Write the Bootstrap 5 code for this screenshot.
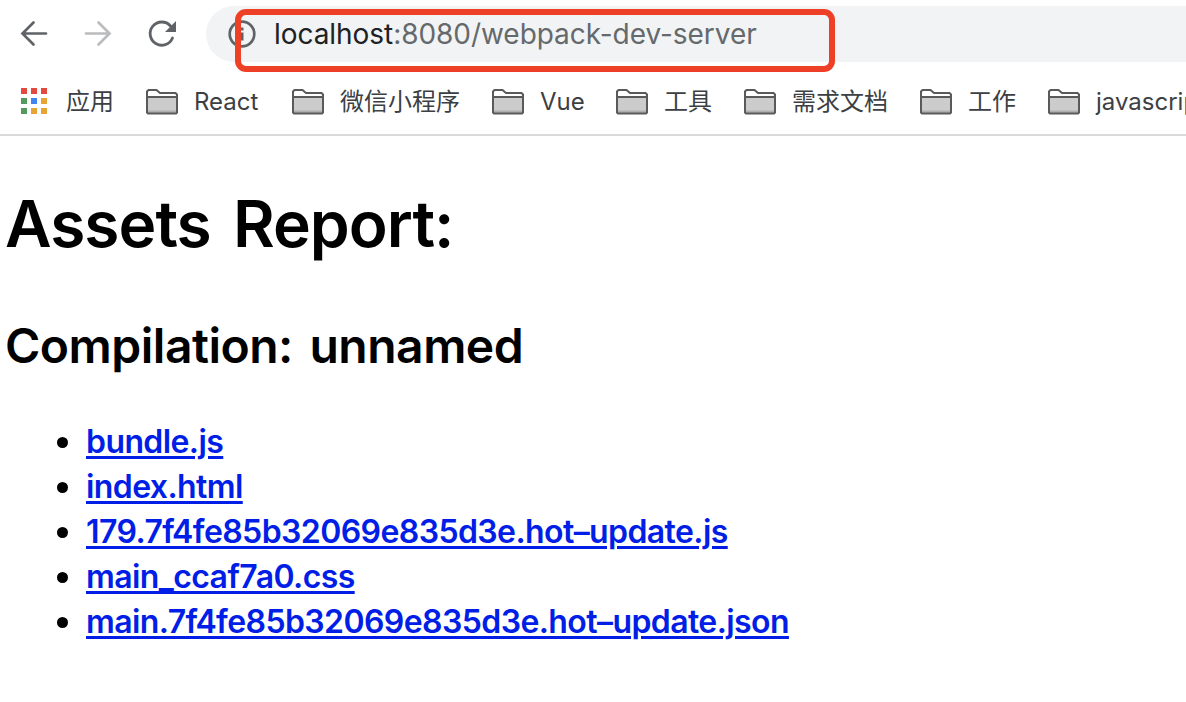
<!DOCTYPE html>
<html lang="zh-CN">
<head>
<meta charset="utf-8">
<meta name="viewport" content="width=device-width, initial-scale=1">
<title>Assets Report</title>
<link href="https://cdn.jsdelivr.net/npm/bootstrap@5.3.0/dist/css/bootstrap.min.css" rel="stylesheet">
<style>
body{font-family:Inter,"Noto Sans CJK SC",sans-serif;color:#000;background:#fff;overflow:hidden;height:702px}
svg{display:block;flex:none}
.toolbar-row{height:68px;padding:6px 0 6px 18px}
.nav-icons{gap:32px;width:188px}
.address{height:56px;background:#f1f3f4;border-radius:28px 0 0 28px;padding-left:22px;font:400 28px/56px Inter,sans-serif;color:#65696c;letter-spacing:-.05px}
.address .host{color:#202124}
.url-text{margin-left:18px}
.marker{position:absolute;left:29px;top:3px;width:600px;height:63px;border:6px solid #ee4026;border-radius:11px}
.bookmarks{height:68px;padding:2px 0 0 18px;gap:32px;border-bottom:2px solid #dadada;font:400 24px/66px Inter,"Noto Sans CJK SC",sans-serif;color:#3c4043}
.bookmarks a{gap:16px;color:inherit;line-height:36px}
.folder-name{width:66px}
.folder-name-short{width:44px}
.report{padding:52px 6px 0 5px}
.report h1{font-size:64px;font-weight:560;line-height:72px;margin:0 0 57px;letter-spacing:-.95px;word-spacing:7px}
.report h2{font-size:48px;font-weight:560;line-height:58px;margin:0 0 44px;letter-spacing:-.5px;word-spacing:5px}
.report ul{padding-left:81px;margin:0;list-style:none;font-size:32px;font-weight:560;line-height:45px;letter-spacing:-.59px}
.report li{height:45px}
.report li::before{content:"";display:inline-block;width:11px;height:11px;border-radius:50%;background:#000;margin:0 18px 0 -29px;vertical-align:5px}
.report a{color:#001ee6;text-decoration-thickness:3px;text-underline-offset:3px}
</style>
</head>
<body>
<svg width="0" height="0" class="position-absolute"><defs>
<symbol id="folder" viewBox="0 0 32 26"><path d="M1 24V3Q1 1 3 1h7.500l3.500 3.500H29q2 0 2 2V24z" fill="#fff"/><path d="M1 8h30v16H1z" fill="#ccc"/><path d="M1 21.500h30V24H1z" fill="#b0b0b0"/><path d="M1 8h30M2.500 1H10.500l3.500 3H29.500L31 5.500V23.500L30 24.500H2L1 23.500V2.500z" fill="none" stroke="#5a5a5a" stroke-width="2"/></symbol>
</defs></svg>
<header>
<div class="toolbar-row d-flex align-items-center">
  <div class="nav-icons d-flex align-items-center flex-shrink-0">
    <svg width="32" height="32" viewBox="0 0 32 32" fill="none" stroke="#5f6368" stroke-width="2.700"><path stroke-linecap="round" d="M28 15.500H5M15.500 4.500L4.500 15.500l11 11"/></svg>
    <svg width="32" height="32" viewBox="0 0 32 32" fill="none" stroke="#babcbe" stroke-width="2.700"><path stroke-linecap="round" d="M4 15.500h23M16.500 4.500l11 11-11 11"/></svg>
    <svg width="32" height="32" viewBox="0 0 32 32"><path d="M26.500 20A11.600 11.600 0 1 1 24.500 8" fill="none" stroke="#5f6368" stroke-width="2.800" stroke-linecap="round"/><path d="M30 3v11H19z" fill="#5f6368"/></svg>
  </div>
  <div class="address position-relative d-flex align-items-center flex-grow-1">
    <svg width="28" height="28" viewBox="0 0 28 28"><circle cx="14" cy="14" r="12.300" fill="none" stroke="#5f6368" stroke-width="2.700"/><path d="M12.500 7.500h3v3h-3zM11 12.500h4.500v8h-3V15H11z" fill="#5f6368"/></svg>
    <span class="url-text text-nowrap"><span class="host">localhost</span>:8080/webpack-dev-server</span>
    <div class="marker"></div>
  </div>
</div>
<nav class="bookmarks d-flex align-items-center text-nowrap overflow-hidden">
  <a class="d-flex align-items-center text-decoration-none flex-shrink-0" href="#"><svg width="32" height="32" viewBox="0 0 32 32"><path d="M3 2h6v6H3zM13 2h6v6h-6zM23 2h6v6h-6z" fill="#e24a3f"/><path d="M3 12h6v6H3zM3 22h6v6H3z" fill="#529a5e"/><path d="M13 12h6v6h-6z" fill="#4285ee"/><path d="M23 12h6v6h-6zM13 22h6v6h-6zM23 22h6v6h-6z" fill="#e6a435"/></svg>应用</a>
  <a class="d-flex align-items-center text-decoration-none flex-shrink-0" href="#"><svg width="32" height="26"><use href="#folder"/></svg><span class="folder-name">React</span></a>
  <a class="d-flex align-items-center text-decoration-none flex-shrink-0" href="#"><svg width="32" height="26"><use href="#folder"/></svg>微信小程序</a>
  <a class="d-flex align-items-center text-decoration-none flex-shrink-0" href="#"><svg width="32" height="26"><use href="#folder"/></svg><span class="folder-name-short">Vue</span></a>
  <a class="d-flex align-items-center text-decoration-none flex-shrink-0" href="#"><svg width="32" height="26"><use href="#folder"/></svg>工具</a>
  <a class="d-flex align-items-center text-decoration-none flex-shrink-0" href="#"><svg width="32" height="26"><use href="#folder"/></svg>需求文档</a>
  <a class="d-flex align-items-center text-decoration-none flex-shrink-0" href="#"><svg width="32" height="26"><use href="#folder"/></svg>工作</a>
  <a class="d-flex align-items-center text-decoration-none flex-shrink-0" href="#"><svg width="32" height="26"><use href="#folder"/></svg>javascript</a>
</nav>
</header>
<main class="report">
  <h1>Assets Report:</h1>
  <h2>Compilation: unnamed</h2>
  <ul>
    <li><a href="#">bundle.js</a></li>
    <li><a href="#">index.html</a></li>
    <li><a href="#">179.7f4fe85b32069e835d3e.hot–update.js</a></li>
    <li><a href="#">main_ccaf7a0.css</a></li>
    <li><a href="#">main.7f4fe85b32069e835d3e.hot–update.json</a></li>
  </ul>
</main>
<script src="https://cdn.jsdelivr.net/npm/bootstrap@5.3.0/dist/js/bootstrap.bundle.min.js"></script>
</body>
</html>
